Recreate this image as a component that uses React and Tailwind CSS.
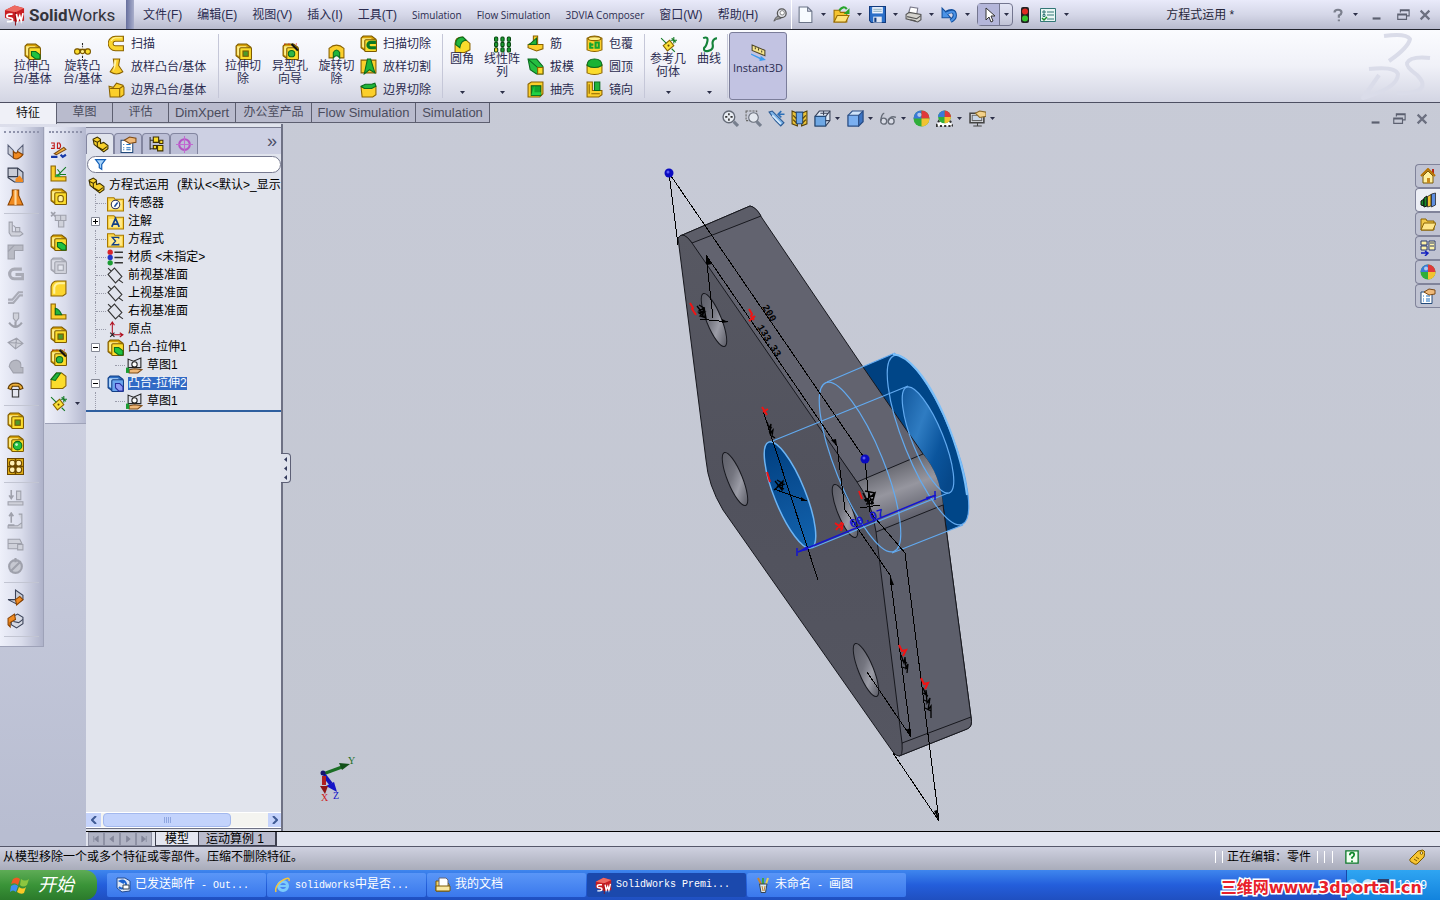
import { useState } from "react";

function Block({ fill = "#fbdc2c", side = "#d7a106", line = "#7d5a00", top = "#fff08a" }) {
  return (
    <>
      <path d="M1 3l2-2h8l4 3v11H5l-4-3z" fill={side} stroke={line} />
      <path d="M2 3h8l3 2H5v8l-3-2z" fill={top} />
      <rect x="4.500" y="4.500" width="11" height="11" rx="1" fill={fill} stroke={line} />
    </>
  );
}

function Folder() {
  return (
    <>
      <path d="M.5 2.500h6l1 1.500h8v11H.5z" fill="#fdd94a" stroke="#a87800" />
      <path d="M2 5.500h12v8H2z" fill="#ffe98c" />
    </>
  );
}

const gray = { fill: "#cfd1da", stroke: "#9fa1ac" };

const icons = {
  extrude: <><Block /><path d="M7 8h4l4 3v4h-4l-4-3z" fill="#1fc240" stroke="#0a6a1e" /></>,
  extrudeBlue: <><Block fill="#6aa5ee" side="#2d6fc4" line="#123f86" top="#b9dcff" /><path d="M8 8h4l3 3v4h-4l-3-3z" fill="#8f9cf5" stroke="#2b2fa0" /></>,
  revolve: <><path d="M8 0v4M8 12v4" stroke="#222" strokeDasharray="2 1" /><path d="M2 6h12v3H2z" fill="#fbdc2c" stroke="#7d5a00" /><circle cx="3" cy="8" r="2.500" fill="#fbdc2c" stroke="#7d5a00" /><circle cx="13" cy="8" r="2.500" fill="#fbdc2c" stroke="#7d5a00" /><circle cx="8" cy="8" r="2" fill="#fff08a" stroke="#7d5a00" /></>,
  sweep: <><path d="M15 3.500H7a4.500 4.500 0 0 0 0 9h8" fill="none" stroke="#8a6200" strokeWidth="5.500" /><path d="M14 3.500H7a4.500 4.500 0 0 0 0 9h7" fill="none" stroke="#fbd52e" strokeWidth="3.800" /><path d="M13 2.500H7a5 5 0 0 0-4 3" fill="none" stroke="#fff3a0" /></>,
  loft: <><path d="M5 1h6l-1 6 4 6q-6 4-12 0l4-6z" fill="#fbcf2b" stroke="#8a6200" /><path d="M6 2h2l-1 6-2 5z" fill="#fff3a0" /></>,
  boundary: <><path d="M1 5l4 1 3-4 6 2 1 2v7l-3 2H2z" fill="#fbcf2b" stroke="#8a6200" /><path d="M2 7h9l3-2M11 7v8" fill="none" stroke="#8a6200" /></>,
  cut: <><Block /><rect x="7.500" y="7.500" width="5" height="5" fill="#4f9a2a" stroke="#7d5a00" /></>,
  hole: <><Block /><circle cx="9" cy="10" r="3" fill="#2fb648" stroke="#0a6a1e" /><path d="M9 1l6 6" stroke="#111" strokeWidth="2" /><path d="M2 1h1M6 1h1M13 1h1" stroke="#e11" /></>,
  revcut: <><path d="M1 5q7-6 14 0v9h-4q-3-9-6 0H1z" fill="#fbcf2b" stroke="#8a6200" /><path d="M5 14V9q3-5 6 0v5q-3-4-6 0z" fill="#1fb53a" stroke="#0a6a1e" /></>,
  sweepcut: <><Block /><path d="M15 7h-5a2.500 2.500 0 0 0 0 5h5" fill="none" stroke="#0a7a24" strokeWidth="3" /></>,
  loftcut: <><path d="M1 2h14v12H1z" fill="#fbcf2b" stroke="#8a6200" /><path d="M7 1h3l4 13-5-3-5 4z" fill="#1fb53a" stroke="#0a6a1e" /></>,
  boundarycut: <><path d="M1 6l4 0 3-2 7 1v8l-3 2H2z" fill="#fbcf2b" stroke="#8a6200" /><path d="M1 5l4-2h6l3-1 1 3-4 2H4z" fill="#1fb53a" stroke="#0a6a1e" /></>,
  fillet: <><path d="M1 7q0-6 7-6l7 6v6l-5 2.500H1z" fill="#fbdc2c" stroke="#8a6200" /><path d="M1.500 8q0-7 7-7l3 3q-5 0-6 7z" fill="#22b53c" stroke="#0a6a1e" /></>,
  chamfer: <><path d="M1 7l5-6h5l4 3v9l-3 2.500H1z" fill="#fbdc2c" stroke="#8a6200" /><path d="M1 7l5-6h4L5 8z" fill="#22b53c" stroke="#0a6a1e" /></>,
  round: <><path d="M1 6q1-5 6-5h8v12l-3 2H1z" fill="#fbd52e" stroke="#8a6200" /><path d="M4 13V7q1-4 5-4h5" fill="none" stroke="#fff3a0" strokeWidth="2" /></>,
  pattern: (
    <g stroke="#0a4a12">
      {[2, 8, 14].map((x) => <rect key={x} x={x - 1.5} y="1" width="3" height="4" rx="1" fill="#1a9c32" />)}
      {[2, 8, 14].map((x) => <rect key={x} x={x - 1.5} y="6" width="3" height="4" rx="1" fill="#1a9c32" />)}
      <rect x=".5" y="11" width="3" height="4" rx="1" fill="#fbcf2b" />
      {[8, 14].map((x) => <rect key={x} x={x - 1.5} y="11" width="3" height="4" rx="1" fill="#1a9c32" />)}
    </g>
  ),
  rib: <><path d="M6 1h4v8h5v4l-6 2-8-3v-3l5-2z" fill="#fbcf2b" stroke="#8a6200" /><path d="M2 9l7-6v6z" fill="#1fb53a" stroke="#0a6a1e" /></>,
  draft: <><path d="M1 1h8l6 7v7H9L3 11z" fill="#25bf40" stroke="#0a6a1e" /><path d="M1 1l9 8h5M10 9v6" stroke="#0a6a1e" fill="none" /><path d="M10 9h5v6h-5z" fill="#fbdc2c" stroke="#8a6200" /></>,
  shell: <><path d="M1 3l3-2h11v11l-3 3H1z" fill="#fbcf2b" stroke="#8a6200" /><path d="M4 4.500h9v9H4z" fill="#11a52e" stroke="#0a5a18" /><path d="M7 4.500v6h6v3H4z" fill="#1fd243" /></>,
  wrap: <><path d="M1 3q7-4 14 0v11q-7 3-14 0z" fill="#fbcf2b" stroke="#8a6200" /><ellipse cx="8" cy="3.500" rx="6" ry="1.800" fill="#fff08a" stroke="#8a6200" /><path d="M4 7v5h3M4 9h3M9 7v5h3V7z" fill="none" stroke="#11a52e" strokeWidth="2" /></>,
  dome: <><path d="M1 6h14v8q-7 3-14 0z" fill="#fbdc2c" stroke="#8a6200" /><path d="M1 7q0-6 7-6t7 6q-7 4-14 0z" fill="#19b334" stroke="#0a6a1e" /></>,
  mirror: <><path d="M1 1h5v8h9v4l-3 2H1z" fill="#fbcf2b" stroke="#8a6200" /><path d="M8 1h5v8H8z" fill="#22b53c" stroke="#0a6a1e" /><path d="M3 3v9M5 12h8" stroke="#8a6200" /></>,
  refgeo: <><path d="M3 9l6-5 4 5-6 5z" fill="#fbe03a" stroke="#8a6200" /><path d="M1 2l5 5M11 12l3 3M13 1v6M10 4h6M11 2l4 4" stroke="#137a24" /><circle cx="8" cy="9" r="1" fill="#6a4b00" /></>,
  curve: <path d="M2 2q5-2 4 3T3 11q-1 4 4 3t4-6 4-6" fill="none" stroke="#14823a" strokeWidth="2" />,
  instant: <><path d="M2 1l12 5v5L2 6z" fill="#f5e48c" stroke="#4d4526" /><path d="M5 3v2M8 4v2M11 6v2" stroke="#4d4526" /><path d="M1 9l9 4v-2l5 4-6 1v-2L1 10z" fill="#3a9bf0" /></>,
  part: <><path d="M1 3l4-2 3 2v4l3-1 4 3v3l-4 3-9-7z" fill="#f7d02b" stroke="#3d3000" /><path d="M1 4l4 2v4l5 3 4-3M5 6l3-2" fill="none" stroke="#3d3000" /></>,
  props: <><path d="M1 4h11v11.500H1z" fill="#fff" stroke="#234a7a" /><path d="M3 8h1M6 8h4M3 11h1M6 11h4M3 13h1M6 13h4" stroke="#1c6fc0" /><path d="M4 4l5-3 6 1v4l-6 1z" fill="#efb978" stroke="#7c4a16" /></>,
  config: <><path d="M2 1v12M2 4h5M2 12h6" stroke="#333" fill="none" /><path d="M5 1h5v5H5zM9 9h5v5H9z" fill="#fbdc2c" stroke="#3d3000" /><path d="M11 4h3v3h-3zM5 9h3v3H5z" fill="#fbdc2c" stroke="#3d3000" /></>,
  target: <><circle cx="8" cy="8" r="5" fill="none" stroke="#b455c4" strokeWidth="2" /><path d="M8 0v16M0 8h16" stroke="#c36ad2" /></>,
  funnel: <path d="M2 2h12L9.500 8v6l-3-2V8z" fill="#a9d4fa" stroke="#1460b8" strokeWidth="1.500" />,
  sensor: <><Folder /><circle cx="8" cy="9" r="4" fill="#fff" stroke="#335" /><path d="M7 11l3-4" stroke="#1b4c9c" strokeWidth="1.500" /></>,
  note: <><Folder /><path d="M4.500 13L8 5l3.500 8M6 10.500h4" fill="none" stroke="#123f86" strokeWidth="1.600" /></>,
  equation: <><Folder /><path d="M11 7V6H5l3 3.500L5 13h6v-1" fill="none" stroke="#123f86" strokeWidth="1.300" /></>,
  material: <><circle cx="3" cy="3" r="2.500" fill="#d9242b" /><circle cx="3" cy="8" r="2.500" fill="#2337c8" /><circle cx="3" cy="13" r="2.500" fill="#1a9c32" /><path d="M7 3h8M7 8h8M7 13h8" stroke="#333" strokeWidth="1.500" /></>,
  plane: <path d="M1 7l6-6 7 8-6 6zM1 1l3 3M11 12l4 3" fill="none" stroke="#333" />,
  origin: <><path d="M5 13V1M3 4l2-3 2 3M5 13h10M12 11l3 2-3 2" fill="none" stroke="#b01020" /><path d="M3 11l4 4M7 11l-4 4" stroke="#222" /></>,
  sketch: <><path d="M2 2l5 2 7-3v9H2z" fill="none" stroke="#222" /><circle cx="8" cy="7" r="2.500" fill="#fff" stroke="#222" /><path d="M3 12l5-1 7 1-4 3H3z" fill="#f0b878" stroke="#7c4a16" /><path d="M0 10h3v5H0z" fill="#1a9c32" /></>,
  sketch3d: <><path d="M1 1h3v5H1M2 3.500h2M7 1h2q2 2.500 0 5H7z" fill="none" stroke="#c01818" /><path d="M4 11l9-6 2 2-9 5z" fill="#f4b53a" stroke="#7c4a16" /><path d="M1 14h6M10 12l2 2 3-2" stroke="#1638a8" strokeWidth="2" fill="none" /></>,
  ribStar: <><path d="M1 1h4v10h10v4H1z" fill="#fbcf2b" stroke="#8a6200" /><path d="M5 11q0-5 6 0z" fill="#22b53c" /><path d="M7 10l8-8M7 4l3 4M9 9h6" stroke="#137a24" /></>,
  ribPlain: <><path d="M1 1h4v10h10v4H1z" fill="#fbcf2b" stroke="#8a6200" /><path d="M5 5q4 1 6 6H5z" fill="#22b53c" stroke="#0a6a1e" /></>,
  boxHole: <><Block /><rect x="7.500" y="7" width="5" height="6" rx="2" fill="#fff2a0" stroke="#7d5a00" /></>,
  ball: <><Block /><circle cx="10" cy="10" r="4" fill="#23c03f" stroke="#0a6a1e" /><circle cx="9" cy="9" r="1.300" fill="#c8f7cf" /></>,
  vent: (
    <>
      <rect x=".5" y=".5" width="15" height="15" fill="#e8b516" stroke="#6b4700" />
      <g fill="#fff0b8" stroke="#6b4700">
        <circle cx="5" cy="5" r="2.800" /><circle cx="11" cy="5" r="2.800" /><circle cx="5" cy="11" r="2.800" /><circle cx="11" cy="11" r="2.800" />
      </g>
      <path d="M8 1v14M1 8h14" stroke="#6b4700" strokeWidth="1.500" />
    </>
  ),
  bend: <><path d="M1 2l5 5v7L1 10zM15 2l-5 5v7l5-4z" fill="#c9ccd6" stroke="#596078" /><path d="M6 8q3 3 4 0l5 3q-5 6-9 3z" fill="#f08a20" stroke="#8a4300" /></>,
  cubeOr: <><path d="M1 2h9l5 4v9H7l-6-4z" fill="#c9ccd6" stroke="#333a4c" /><path d="M10 2v8H1M10 10l5 5" stroke="#333a4c" fill="none" /><path d="M8 12l4-3 3 4v2H8z" fill="#f08a20" /></>,
  loftOr: <><path d="M5 1h6v5l4 9H1l4-9z" fill="#f08a20" stroke="#8a4300" /><path d="M8 1v14" stroke="#ffd9a0" strokeWidth="2" /></>,
  g1: <g {...gray}><path d="M2 2h3v9h8l2 2-3 2H4l-2-3zM6 5l5 5" /><path d="M8 7h4v4H8z" /></g>,
  g2: <g {...gray}><path d="M1 2h14v5H7v8H1z" fill="#b9bbc5" /><path d="M1 8l6-6" fill="none" /></g>,
  g3: <path d="M14 3H7a4 4 0 0 0 0 9h8V8H8" fill="none" stroke="#a9abb6" strokeWidth="3" />,
  g4: <path d="M1 13h5l6-7h3M1 10h4l6-7h4" fill="none" stroke="#a9abb6" strokeWidth="2" />,
  g5: <g {...gray}><path d="M6 1h5v5l-2.500 3L6 6z" /><path d="M2 10q6 8 12 0M8 9v5" fill="none" strokeWidth="2" /></g>,
  g6: <g {...gray}><path d="M1 7l8-4 6 5-7 5zM1 7l14 1M9 3l-1 10" /></g>,
  g7: <g {...gray}><path d="M2 8q1-6 7-6 5 1 4 7h2v5H6z" fill="#b5b7c1" /></g>,
  gCross: <g {...gray}><path d="M1 1l4 4M5 1L1 5" strokeWidth="1.500" /><path d="M5 4h5v5H5zM10 4h5v5h-5zM8 9h5v6H8z" /></g>,
  gBox: <><Block fill="#cfd1da" side="#b5b7c1" line="#9fa1ac" top="#dddfe8" /><rect x="7.500" y="7.500" width="5" height="5" fill="#e4e6ee" stroke="#9fa1ac" /></>,
  phone: <><path d="M1 7q1-5 7-5t7 5l-3 1-1-3H5L4 8z" fill="#eeb038" stroke="#5f3a00" /><path d="M5 8h6v7H5z" fill="#e4e6ee" stroke="#333" /></>,
  down: <g {...gray}><path d="M4 1v7M2 6l2 3 2-3" fill="none" strokeWidth="1.500" /><path d="M9 2h4v8H9zM1 12h14v3H1z" /></g>,
  up: <g {...gray}><path d="M4 10V2M2 4l2-3 2 3" fill="none" strokeWidth="1.500" /><path d="M11 2h3v8l-4 3H1v2h13V9M1 12h6" /></g>,
  g8: <g {...gray}><path d="M1 4h11l2 4v5H1zM1 8h13" /><path d="M10 9h5v5h-5z" /></g>,
  g9: <><circle cx="8" cy="8" r="6" fill="#c6c8d1" stroke="#9fa1ac" strokeWidth="2" /><path d="M3 13L13 3M8 0v4" stroke="#9fa1ac" strokeWidth="2" /></>,
  angle: <><path d="M8 1v9H1l8 4 6-4V6z" fill="#c9ccd6" stroke="#3a4258" /><path d="M8 10l4-3 3 3-6 5z" fill="#f08a20" stroke="#8a4300" /></>,
  wrapOr: <><path d="M4 5l6-3 5 3v6l-6 4-5-3z" fill="#d5d8e2" stroke="#3a4258" /><path d="M1 6l6-4 1 5-5 3v4L1 12z" fill="#f08a20" stroke="#8a4300" /><path d="M6 9l5 1 4-3" stroke="#3a4258" fill="none" /></>,
  page: <path d="M2 1h8l4 4v10.500H2zM10 1v4h4" fill="#f7fbff" stroke="#6b7488" />,
  open: <><path d="M1 4h5l1 2h6v9H1z" fill="#f5c430" stroke="#9a6d00" /><path d="M4 9h11l-3 6H1z" fill="#ffe37a" stroke="#9a6d00" /><path d="M6 4q4-5 7-1" fill="none" stroke="#28a52c" strokeWidth="2" /><path d="M15.500 2v5.500H10z" fill="#28a52c" /></>,
  save: <><path d="M.5.500h15v15H2l-1.500-2z" fill="#2b6fc8" stroke="#123b7e" /><path d="M3 1h10v6H3z" fill="#eef4ff" /><path d="M4 3h8M4 5h8" stroke="#8ab" /><path d="M4 10h8v5.500H4z" fill="#dfe6f2" /><path d="M6 11v4" stroke="#123b7e" strokeWidth="2" /></>,
  print: <><path d="M5 1l7 1-1 6H3z" fill="#fff" stroke="#778" /><path d="M1 8l3-2 11 2v5l-3 2-11-3z" fill="#d4d3ce" stroke="#555" /><path d="M2 10l9 2 4-3M5 13l5 1" fill="none" stroke="#555" /></>,
  undo: <><path d="M4 7q9-5 9 2 0 3-4 5" fill="none" stroke="#14509e" strokeWidth="4" /><path d="M1 2v9h8L6.500 8 4 5z" fill="#4b93e6" stroke="#14509e" /><path d="M5 7q8-4 8 2 0 3-4 5" fill="none" stroke="#4b93e6" strokeWidth="2" /></>,
  cursor: <path d="M5 1v12l3-3 2 5 2-1-2-5h4z" fill="#fff" stroke="#333" />,
  light: <><rect x="4" y="0" width="8" height="16" rx="2" fill="#222" /><circle cx="8" cy="4.500" r="3" fill="#e02b22" /><circle cx="8" cy="11.500" r="3" fill="#35c42c" /></>,
  options: <><path d="M.5 1.500h15v13H.5z" fill="#eaf7f4" stroke="#377" /><path d="M7 5h7M7 8h7M7 12h7" stroke="#377" /><path d="M3 4h2v2H3zM3 7.500h2v2H3z" fill="none" stroke="#377" /><path d="M2 11l2 2 3-3" stroke="#1a8c2c" strokeWidth="1.500" fill="none" /></>,
  pin: <><circle cx="10" cy="6" r="5" fill="#e3e4ea" stroke="#555" strokeWidth="1.500" /><circle cx="10.500" cy="5.500" r="2.500" fill="#fff" stroke="#777" /><path d="M6 9l3 3-5 1-3 2 2-4z" fill="#999" stroke="#555" /></>,
  zoomFit: <><circle cx="6.500" cy="6.500" r="5.500" fill="#e9edf3" stroke="#666c78" strokeWidth="1.300" /><path d="M6.500 3v2M6.500 8v2M3 6.500h2M8 6.500h2" stroke="#333" strokeWidth="1.500" /><path d="M11 11l4 4" stroke="#777f8e" strokeWidth="3" /></>,
  zoomArea: <><path d="M1 1h10v9H1z" fill="none" stroke="#666" strokeDasharray="2 1" /><circle cx="8" cy="7" r="4.500" fill="#e4e8ef" stroke="#666c78" /><path d="M11 11l4 4" stroke="#777f8e" strokeWidth="3" /></>,
  prev: <><path d="M1 2l3-1 6 6 5 5-3 3-5-5z" fill="#7fb6ea" stroke="#2c5c96" /><path d="M4 5l8 8" stroke="#d6eafc" strokeWidth="1.500" /><path d="M15.500 4H10m2.500-3l-3 3 3 3" stroke="#2c6fb8" strokeWidth="1.500" fill="none" /></>,
  section: <><path d="M1 1l5 2v12l-5-2zM10 3l5-2v12l-5 2z" fill="#ecc335" stroke="#57430a" /><path d="M5 2h6v11H5z" fill="#6aa5e8" stroke="#234a7a" /><path d="M2 5l3 3M2 9l3 3M11 8l3-3M11 12l3-3" stroke="#57430a" /></>,
  orient: <><path d="M1 6l4-5h10v9l-4 5H1z" fill="#dfe9f6" stroke="#3a4258" /><path d="M1 6h10v9H1z" fill="#6fa8e4" stroke="#234a7a" /><path d="M11 6l4-5M6 3h7M9 1v4M11 10h4" stroke="#3a4258" /></>,
  display: <><path d="M1 5l4-4h10v10l-4 4H1z" fill="#cfe3fa" stroke="#2b4f86" /><path d="M1 5h10v10H1z" fill="#7aaff0" stroke="#2b4f86" /><path d="M11 5l4-4v10l-4 4z" fill="#3c74c4" stroke="#2b4f86" /></>,
  glasses: <g fill="#d9dce6" stroke="#666c78" strokeWidth="1.300"><circle cx="3.500" cy="10.500" r="2.800" /><circle cx="10.500" cy="10.500" r="2.800" /><path d="M1 10Q1 4 4 3M8 10q2-5 7-3" fill="none" /></g>,
  sphere: <><circle cx="8" cy="8" r="7.500" fill="#2fae3a" /><path d="M8 8V.500A7.500 7.500 0 0 0 .5 8z" fill="#3a78d8" /><path d="M8 8V.500A7.500 7.500 0 0 1 15.500 8z" fill="#e0393a" /><path d="M8 8h7.500A7.500 7.500 0 0 1 8 15.500z" fill="#f2c230" /><circle cx="6" cy="4.500" r="2" fill="#fff" opacity=".6" /></>,
  scene: <><path d="M0 15l3-5h10l3 5z" fill="#fff" stroke="#333" strokeDasharray="2 2" strokeWidth="2" /><circle cx="8" cy="6.500" r="6" fill="#2fae3a" /><path d="M8 6.500v-6a6 6 0 0 1 6 6z" fill="#e0393a" /><path d="M8 6.500v-6a6 6 0 0 0-6 6z" fill="#3a78d8" /><path d="M8 6.500h6a6 6 0 0 1-6 6z" fill="#f2c230" /></>,
  viewset: <><path d="M1 3h13v9H1z" fill="#e6e8ee" stroke="#444" strokeWidth="1.500" /><path d="M3 5h9v5H3z" fill="#c9d6e8" stroke="#666" /><path d="M6 3l4-2 6 1v4l-6 1z" fill="#f3d18a" stroke="#8a6a2a" /><path d="M4 15h8M8 12v3" stroke="#444" /></>,
  home: <><path d="M3 8v7h10V8L8 3z" fill="#fff0a0" stroke="#7d5a00" /><path d="M12 1h2v5h-2z" fill="#b42a1a" /><path d="M1 8l7-7 7 7" fill="none" stroke="#b87500" strokeWidth="2" /><path d="M7 10h3v5H7z" fill="#c98a1a" /></>,
  books: <><path d="M1 9l3-2v7l-3-1z" fill="#1a8c2c" stroke="#111" /><path d="M4 6l3-2v10l-3 1z" fill="#1a8c2c" stroke="#111" /><path d="M7.500 4.500l3.500-2v11.500l-3.500 1z" fill="#f2c230" stroke="#111" strokeWidth=".7" /><path d="M11.500 2l4-1v12l-4 2z" fill="#5e8ee0" stroke="#111" strokeWidth=".7" /></>,
  folderOpen: <><path d="M1 3h5l1 2h7v9H1z" fill="#f2c94a" stroke="#8a6200" /><path d="M4 7h12l-3 7H1z" fill="#ffe68a" stroke="#8a6200" /></>,
  palette: <><path d="M1 1h6v4H1zM1 6h6v4H1zM9 1h6v9H9z" fill="#fdf2a8" stroke="#2a3a6e" /><path d="M10 3h4M10 6h4" stroke="#2a3a6e" /><path d="M1 13h6M5 11l3 2-3 3" stroke="#1320c0" strokeWidth="1.500" fill="none" /></>,
  mail: <><path d="M2 1h8l5 3v10l-8 1-5-4z" fill="#dfe9f8" stroke="#224a90" /><path d="M4 10a4 4 0 1 0 1-6l4 2" fill="none" stroke="#1a62d0" strokeWidth="2" /><path d="M8 8h6v4H8z" fill="#fff" stroke="#345" /></>,
  ie: <><circle cx="8" cy="9" r="4.500" fill="none" stroke="#7ccbfb" strokeWidth="3" /><path d="M4 9h9" stroke="#7ccbfb" strokeWidth="2" /><path d="M1 15Q-1 9 8 3q7-4 6 1" fill="none" stroke="#f6c53a" strokeWidth="1.500" /></>,
  docs: <><path d="M1 4h10l3 3v7H1z" fill="#f2d36a" stroke="#7d5a00" /><path d="M4 1h7l2 2v7H4z" fill="#fff" stroke="#667" /><path d="M1 9h14v5H1z" fill="#f8e7a2" stroke="#7d5a00" /></>,
  paint: <><path d="M3 1l4 8" stroke="#c9842c" strokeWidth="2" /><path d="M8 1v8" stroke="#3aa54a" strokeWidth="2" /><path d="M13 1l-3 9" stroke="#e6cf5a" strokeWidth="2" /><path d="M4.500 7h7.500l-1.500 8.500H6z" fill="#dce9ee" stroke="#345" /><path d="M7 9l1 5M10 9l-1 5" stroke="#c9842c" /></>,
  help: <><path d="M1 1h14v14H1z" fill="#f2fff2" stroke="#0f7a2c" strokeWidth="1.500" /><path d="M5.500 6q0-3 2.500-3t2.500 2.500Q10.500 7 8 8.500V10M8 12v2" fill="none" stroke="#0f8a2c" strokeWidth="2" /></>,
  tag: <><path d="M1 10l8-8 5-1 2 2-1 5-7 7q-2 1-4-1l-2-1q-2-2-1-3z" fill="#f7c531" stroke="#7d5a00" /><circle cx="12.500" cy="4" r="1.300" fill="#fff" stroke="#7d5a00" /><path d="M5 10l3 2M7 8l3 2" stroke="#7d5a00" /></>,
  question: <path d="M4 5q0-3 4-3t4 3q0 2-3 3.500V11M9 13v2" fill="none" stroke="#7c808e" strokeWidth="2.500" />,
  min: <path d="M3 12h9" stroke="#5c6070" strokeWidth="2.500" />,
  restore: <path d="M5 5V2h10v7h-3M5 3h10M2 7h10v6H2zM2 8h10" fill="none" stroke="#5c6070" strokeWidth="1.300" />,
  close: <path d="M3 3l10 10M13 3L3 13" stroke="#6c7080" strokeWidth="2.500" />,
};

function Icon({ name, className = "h-4 w-4" }) {
  return (
    <svg viewBox="0 0 16 16" className={`shrink-0 ${className}`} aria-hidden="true">
      {icons[name]}
    </svg>
  );
}

function Caret({ className = "" }) {
  return (
    <svg viewBox="0 0 5 3" className={`h-[3px] w-[5px] shrink-0 ${className}`} aria-hidden="true">
      <path d="M0 0h5L2.500 3z" fill="#2c2f48" />
    </svg>
  );
}

function Cube({ className }) {
  return (
    <svg viewBox="0 0 22 22" className={`shrink-0 ${className}`} aria-hidden="true">
      <path d="M1 6l10-5 10 3v13l-9 1-11-4z" fill="#c81e22" />
      <path d="M1 6l10-5 10 3-9 4z" fill="#ee6a62" />
      <path d="M12 8v14" stroke="#8d0f14" />
      <path d="M9 10H6q-3 0-3 2t3 2 3 2-3 2H3" fill="none" stroke="#fff" strokeWidth="1.800" />
      <path d="M13 10l1.500 7 2-5 1.500 5 2-8" fill="none" stroke="#fff" strokeWidth="1.800" />
    </svg>
  );
}

const menus = ["文件(F)", "编辑(E)", "视图(V)", "插入(I)", "工具(T)", "Simulation", "Flow Simulation", "3DVIA Composer", "窗口(W)", "帮助(H)"];

function TitleBar() {
  return (
    <header className="flex h-[30px] shrink-0 items-center border-b border-[#23242e] bg-linear-to-b from-[#e9eafa] via-[#d5d7e8] to-[#b9bbce]">
      <div className="flex w-[126px] shrink-0 items-center gap-1 pl-1">
        <Cube className="h-[22px] w-[21px]" />
        <span className="font-['Roboto',sans-serif] text-[17px] leading-5 text-[#33343c]">
          <b>Solid</b>Works
        </span>
      </div>
      <div className="h-full w-2 shrink-0 bg-linear-to-r from-[#676f9e] to-[#a9aecb]" />
      <nav className="flex h-full shrink-0 items-center gap-[15px] border-r border-white pr-1 pl-[9px]">
        {menus.map((m) => (
          <button
            key={m}
            type="button"
            className={`leading-5 whitespace-nowrap text-[#2b2c50] ${/^[A-Z0-9]/.test(m) ? "font-['Open_Sans',sans-serif] text-[10px]" : "text-xs"}`}
          >
            {m}
          </button>
        ))}
        <button type="button" aria-label="固定菜单"><Icon name="pin" className="h-[14px] w-[14px]" /></button>
      </nav>
      <div className="flex shrink-0 items-center pl-[5px]">
        {["page", "open", "save", "print", "undo"].map((n) => (
          <button key={n} type="button" aria-label={n} className="flex w-9 items-center gap-[7px]">
            <Icon name={n} className="h-[17px] w-[17px]" />
            <Caret />
          </button>
        ))}
        <button type="button" aria-label="选择" className="flex h-[23px] w-9 items-center rounded-sm border border-[#73758f]">
          <span className="flex h-full w-[22px] items-center justify-center border-r border-[#73758f] bg-[#b4b6da]">
            <Icon name="cursor" />
          </span>
          <Caret className="ml-1" />
        </button>
        <button type="button" aria-label="重建模型" className="ml-1"><Icon name="light" /></button>
        <button type="button" aria-label="选项" className="ml-[7px] flex items-center gap-2">
          <Icon name="options" />
          <Caret />
        </button>
      </div>
      <h1 className="min-w-0 flex-1 truncate text-center text-xs text-[#26273a]">方程式运用 *</h1>
      <div className="flex shrink-0 items-center gap-2 pr-2">
        <button type="button" aria-label="帮助" className="mr-1 flex items-center gap-2">
          <Icon name="question" className="h-[14px] w-[14px]" />
          <Caret />
        </button>
        <button type="button" aria-label="最小化"><Icon name="min" className="h-[14px] w-[14px]" /></button>
        <button type="button" aria-label="还原"><Icon name="restore" className="ml-1 h-[14px] w-[14px]" /></button>
        <button type="button" aria-label="关闭"><Icon name="close" className="h-[14px] w-[14px]" /></button>
      </div>
    </header>
  );
}

function BigTool({ icon, lines, width, caret }) {
  return (
    <button type="button" className={`flex h-full shrink-0 flex-col items-center ${width} ${caret ? "pt-[6px]" : "pt-[13px]"}`}>
      <Icon name={icon} className="h-[17px] w-[17px]" />
      <span className="text-xs leading-[13px] whitespace-nowrap">
        {lines.map((l) => <span key={l} className="block">{l}</span>)}
      </span>
      {caret && <Caret className="mt-auto mb-2" />}
    </button>
  );
}

function ToolList({ items, width }) {
  return (
    <div className={`flex h-full shrink-0 flex-col pt-[2px] ${width}`}>
      {items.map(([icon, label]) => (
        <button key={label} type="button" className="flex h-[23px] items-center gap-[6px] text-xs whitespace-nowrap">
          <Icon name={icon} className="h-[17px] w-[17px]" />
          {label}
        </button>
      ))}
    </div>
  );
}

function Rule() {
  return <div className="my-1 w-px shrink-0 self-stretch bg-[#c5c7d8]" />;
}

function Ribbon() {
  return (
    <div className="flex h-[73px] shrink-0 items-stretch border-b border-[#4d4f62] bg-linear-to-b from-[#fbfcff] via-[#f0f1f8] to-[#d3d5e3] pl-[7px] text-[#2b2c50]">
      <BigTool icon="extrude" lines={["拉伸凸", "台/基体"]} width="w-[50px]" />
      <BigTool icon="revolve" lines={["旋转凸", "台/基体"]} width="w-[51px]" />
      <ToolList width="w-[110px]" items={[["sweep", "扫描"], ["loft", "放样凸台/基体"], ["boundary", "边界凸台/基体"]]} />
      <Rule />
      <BigTool icon="cut" lines={["拉伸切", "除"]} width="w-[48px]" />
      <BigTool icon="hole" lines={["异型孔", "向导"]} width="w-[46px]" />
      <BigTool icon="revcut" lines={["旋转切", "除"]} width="w-[47px]" />
      <ToolList width="w-[82px]" items={[["sweepcut", "扫描切除"], ["loftcut", "放样切割"], ["boundarycut", "边界切除"]]} />
      <Rule />
      <BigTool icon="fillet" lines={["圆角"]} width="w-[38px]" caret />
      <BigTool icon="pattern" lines={["线性阵", "列"]} width="w-[42px]" caret />
      <div className="w-1 shrink-0" />
      <ToolList width="w-[59px]" items={[["rib", "筋"], ["draft", "拔模"], ["shell", "抽壳"]]} />
      <ToolList width="w-[58px]" items={[["wrap", "包覆"], ["dome", "圆顶"], ["mirror", "镜向"]]} />
      <Rule />
      <BigTool icon="refgeo" lines={["参考几", "何体"]} width="w-[46px]" caret />
      <BigTool icon="curve" lines={["曲线"]} width="w-[36px]" caret />
      <Rule />
      <button type="button" className="my-[2px] ml-px flex w-[58px] shrink-0 flex-col items-center rounded-[3px] border border-[#7b7d9a] bg-[#c2c3e2] pt-[11px]">
        <Icon name="instant" className="h-[17px] w-[17px]" />
        <span className="font-['Open_Sans',sans-serif] text-[11px] leading-[14px]">Instant3D</span>
      </button>
      <svg viewBox="0 0 80 72" className="ml-auto h-[72px] w-20 shrink-0" aria-hidden="true">
        <g fill="none" stroke="#dadce9" strokeWidth="4" strokeLinejoin="round">
          <path d="M24 6q22-3 26 3-2 9-21 22" />
          <path d="M9 39q26-3 29 5 0 14-35 24l16-23" />
          <path d="M70 28q-20-2-23 5-1 4 10 12 10 10 2 15-8 4-22 3" />
        </g>
      </svg>
    </div>
  );
}

const tabs = [
  ["特征", "w-[57px]"],
  ["草图", "w-[56px]"],
  ["评估", "w-[56px]"],
  ["DimXpert", "w-[67px]"],
  ["办公室产品", "w-[76px]"],
  ["Flow Simulation", "w-[104px]"],
  ["Simulation", "w-[74px]"],
];

function TabRow() {
  const [active, setActive] = useState("特征");
  return (
    <div className="flex h-[21px] shrink-0 items-start">
      <div role="tablist" className="flex w-[722px] shrink-0">
        {tabs.map(([label, w]) => (
          <button
            key={label}
            type="button"
            role="tab"
            aria-selected={active === label}
            onClick={() => setActive(label)}
            className={`${w} ${
              active === label ? "h-[21px] bg-[#eff0f7] text-[#111] text-xs" : "h-5 border-b bg-[#b9bbcd] text-[#4a4b5c] text-[13px]"
            } border-r border-[#5d5f70] leading-[19px] whitespace-nowrap`}
          >
            {/[A-Z]/.test(label) ? label : <span className="block text-xs leading-[19px]">{label}</span>}
          </button>
        ))}
      </div>
      <div className="flex h-[30px] shrink-0 items-center">
        {[["zoomFit"], ["zoomArea"], ["prev"], ["section"], ["orient", 1], ["display", 1], ["glasses", 1], ["sphere"], ["scene", 1], ["viewset", 1]].map(([n, caret]) => (
          <button key={n} type="button" aria-label={n} className={`flex items-center gap-1 ${caret ? "w-[33px]" : "w-[23px]"}`}>
            <Icon name={n} className="h-[17px] w-[17px]" />
            {caret && <Caret />}
          </button>
        ))}
      </div>
      <div className="ml-auto flex h-8 shrink-0 items-center gap-[9px] pr-[11px]">
        {["min", "restore", "close"].map((n) => (
          <button key={n} type="button" aria-label={`文档 ${n}`}><Icon name={n} className="h-[14px] w-[14px]" /></button>
        ))}
      </div>
    </div>
  );
}

const barOne = [
  ["bend", "cubeOr", "loftOr"],
  ["g1", "g2", "g3", "g4", "g5", "g6", "g7", "phone"],
  ["cut", "ball", "vent"],
  ["down", "up", "g8", "g9"],
  ["angle", "wrapOr"],
];
const barTwo = ["sketch3d", "ribStar", "boxHole", "gCross", "extrude", "gBox", "round", "ribPlain", "cut", "hole", "chamfer", "refgeo"];

function SideBars() {
  return (
    <div className="flex w-[86px] shrink-0 items-start gap-px bg-linear-to-b from-[#dcdeeb] to-[#b8bdd1]">
      <div className="mt-[3px] w-11 border-r border-b border-[#9ea2b8] bg-linear-to-r from-[#eef0fa] via-[#d9dceb] to-[#aeb2c9] pb-[9px]">
        <div className="mx-1 mt-1 border-t-2 border-dotted border-[#8f93ab]" />
        <div className="mt-[7px] pl-1">
          {barOne.map((group, i) => (
            <div key={i} className={i ? "mr-1 mt-1 border-t border-[#c2c5d2] pt-[3px]" : ""}>
              {group.map((n) => (
                <button key={n} type="button" aria-label={n} className="flex h-[23px] w-[23px] items-center justify-center">
                  <Icon name={n} className="h-[17px] w-[17px]" />
                </button>
              ))}
            </div>
          ))}
          <div className="mt-1 mr-1 border-t border-[#c2c5d2]" />
        </div>
      </div>
      <div className="mt-[3px] w-[41px] border-b border-[#9ea2b8] bg-linear-to-r from-[#eef0fa] via-[#d9dceb] to-[#b4b8cf] pb-2">
        <div className="mx-1 mt-1 border-t-2 border-dotted border-[#8f93ab]" />
        <div className="mt-[6px] pl-[3px]">
          {barTwo.map((n) => (
            <button key={n} type="button" aria-label={n} className="flex h-[23px] w-full items-center gap-2 pl-[2px]">
              <Icon name={n} className="h-[17px] w-[17px]" />
              {n === "refgeo" && <Caret />}
            </button>
          ))}
        </div>
      </div>
    </div>
  );
}

const nodes = [
  { icon: "sensor", label: "传感器" },
  { icon: "note", label: "注解", mark: "+" },
  { icon: "equation", label: "方程式" },
  { icon: "material", label: "材质 <未指定>" },
  { icon: "plane", label: "前视基准面" },
  { icon: "plane", label: "上视基准面" },
  { icon: "plane", label: "右视基准面" },
  { icon: "origin", label: "原点" },
  { icon: "extrude", label: "凸台-拉伸1", mark: "-" },
  { icon: "sketch", label: "草图1", deep: true },
  { icon: "extrudeBlue", label: "凸台-拉伸2", mark: "-", selected: true },
  { icon: "sketch", label: "草图1", deep: true },
];

function TreeRow({ node }) {
  return (
    <li className="flex h-[18px] items-center">
      <span className="flex h-full w-[21px] shrink-0 items-center pl-[5px]">
        {node.mark ? (
          <svg viewBox="0 0 9 9" className="h-[9px] w-[9px]" aria-hidden="true">
            <path d="M.5.500h8v8h-8z" fill="#fff" stroke="#848894" />
            <path d={node.mark === "+" ? "M2 4.500h5M4.500 2v5" : "M2 4.500h5"} stroke="#000" />
          </svg>
        ) : (
          <span className="ml-1 flex h-full w-3 items-center border-l border-dotted border-[#9a9cab]">
            {!node.deep && <span className="w-[10px] border-t border-dotted border-[#9a9cab]" />}
          </span>
        )}
      </span>
      {node.deep && <span className="mr-px ml-2 w-[10px] shrink-0 border-t border-dotted border-[#9a9cab]" />}
      <button type="button" className="flex items-center gap-1 whitespace-nowrap">
        <Icon name={node.icon} className="h-[17px] w-[17px]" />
        <span className={node.selected ? "bg-[#316ac5] text-xs leading-[13px] text-white" : "text-xs leading-[18px]"}>{node.label}</span>
      </button>
    </li>
  );
}

function TreePanel() {
  return (
    <aside className="relative flex w-[197px] shrink-0 flex-col border-r-2 border-[#6e7184] bg-[#e1e4ed]">
      <div className="mt-[3px] flex h-[27px] shrink-0 items-end border-t border-[#7a7d92] bg-[#cdd0e3]">
        {["part", "props", "config", "target"].map((n, i) => (
          <button
            key={n}
            type="button"
            aria-label={n}
            className={`flex h-[21px] w-7 items-center justify-center rounded-t-sm border border-b-0 border-[#8386a0] ${i ? "bg-[#bcbfd6]" : "bg-[#e1e4ed]"}`}
          >
            <Icon name={n} className="h-[17px] w-[17px]" />
          </button>
        ))}
        <button type="button" aria-label="展开" className="mr-1 ml-auto text-lg leading-[26px] text-[#4d5068]">»</button>
      </div>
      <label className="mt-[2px] ml-[1px] flex h-[17px] shrink-0 items-center gap-1 rounded-full border border-[#777a90] bg-white px-[6px]">
        <Icon name="funnel" className="h-[13px] w-[13px]" />
        <input type="text" aria-label="过滤" className="w-full min-w-0 bg-transparent text-xs outline-none" />
      </label>
      <div className="min-h-0 flex-1 overflow-hidden pt-[3px] text-black">
        <div className="flex h-[18px] items-center gap-1 pl-[2px] text-xs whitespace-nowrap">
          <Icon name="part" className="h-[17px] w-[17px]" />
          <span>方程式运用</span>
          <span className="ml-1">(默认&lt;&lt;默认&gt;_显示</span>
        </div>
        <ul>
          {nodes.map((n, i) => <TreeRow key={i} node={n} />)}
        </ul>
        <div className="h-[3px] border-t-2 border-[#2f5f9f]" />
      </div>
      <div className="flex h-4 shrink-0 items-center border-y border-white bg-[#f4f4f0]">
        <button type="button" aria-label="向左滚动" className="flex h-full w-[15px] items-center justify-center bg-[#c5d3fb]">
          <svg viewBox="0 0 6 8" className="h-2 w-[6px]"><path d="M5 0L1 4l4 4" fill="none" stroke="#3f5a94" strokeWidth="2" /></svg>
        </button>
        <div className="mx-[2px] flex h-full w-32 items-center justify-center gap-px rounded-sm border border-[#a3b8ee] bg-[#c3d3fc]">
          {[0, 1, 2, 3].map((i) => <span key={i} className="h-[6px] w-px bg-[#8fa6e0]" />)}
        </div>
        <button type="button" aria-label="向右滚动" className="ml-auto flex h-full w-[13px] items-center justify-center bg-[#c5d3fb]">
          <svg viewBox="0 0 6 8" className="h-2 w-[6px]"><path d="M1 0l4 4-4 4" fill="none" stroke="#3f5a94" strokeWidth="2" /></svg>
        </button>
      </div>
      <div className="h-[3px] shrink-0 border-t border-[#6e7184]" />
      <button type="button" aria-label="折叠面板" className="absolute top-[329px] -right-[10px] z-10 flex h-[30px] w-[10px] flex-col items-center justify-center gap-1 rounded-r-sm border border-l-0 border-[#5d6076] bg-[#dfe2ec]">
        {[0, 1, 2].map((i) => (
          <svg key={i} viewBox="0 0 3 5" className="h-[5px] w-[3px]"><path d="M3 0v5L0 2.500z" fill="#333a5c" /></svg>
        ))}
      </button>
    </aside>
  );
}

const holes = [[714, 320], [735, 479], [845, 511], [866, 670]];

function Model() {
  return (
    <svg viewBox="283 124 1157 707" preserveAspectRatio="xMinYMin meet" className="absolute inset-0 h-full w-full" role="img" aria-label="模型">
      <defs>
        <linearGradient id="front" x1="0" y1="0" x2="0" y2="1">
          <stop offset="0" stopColor="#575862" />
          <stop offset="0.500" stopColor="#51525d" />
          <stop offset="1" stopColor="#555661" />
        </linearGradient>
        <linearGradient id="bore" x1="0.200" y1="0" x2="0.500" y2="1">
          <stop offset="0" stopColor="#5b5c66" />
          <stop offset="0.450" stopColor="#74757f" />
          <stop offset="0.700" stopColor="#9b9ca6" />
          <stop offset="1" stopColor="#62636d" />
        </linearGradient>
        <linearGradient id="round" gradientUnits="userSpaceOnUse" x1="888" y1="466" x2="908" y2="520">
          <stop offset="0" stopColor="#66676f" />
          <stop offset="0.450" stopColor="#96969f" />
          <stop offset="1" stopColor="#5e5f6b" />
        </linearGradient>
        <linearGradient id="blue" x1="0" y1="0" x2="0.300" y2="1">
          <stop offset="0" stopColor="#0b4f94" />
          <stop offset="0.450" stopColor="#2f7cc2" />
          <stop offset="0.750" stopColor="#0b559d" />
          <stop offset="1" stopColor="#06488a" />
        </linearGradient>
        <linearGradient id="disc" x1="0" y1="0" x2="0" y2="1">
          <stop offset="0" stopColor="#003f80" />
          <stop offset="0.600" stopColor="#0d559c" />
          <stop offset="1" stopColor="#1163ae" />
        </linearGradient>
      </defs>

      {/* boss behind the plate */}
      <path d="M827 382L895 353L960 526L892 553z" fill="#00407f" />
      <ellipse rx="24" ry="91" transform="translate(928 440) rotate(-22)" fill="#004688" />
      <ellipse rx="15.500" ry="57" transform="translate(928 440) rotate(-22)" fill="url(#blue)" />

      {/* plate */}
      <path d="M680 236L750 206Q756 207 762 218L863 367L923 454Q939 474 943 505L971 717Q973 727 967 729L899 756L870 500z" fill="#62636f" stroke="#17181e" />
      <path d="M876 532L943 505L971 717Q973 727 967 729L899 756z" fill="#5d5f6b" />
      <path d="M857 482L923 454Q940 474 943 505L876 532Q872 502 857 482z" fill="url(#round)" />
      <path d="M680 236L750 206Q756 207 761 216L692 243Q686 234 680 236z" fill="#5c5d68" stroke="#17181e" />
      <path d="M902 743L971 717Q973 727 967 729L899 756z" fill="#5d5e69" stroke="#17181e" />
      <path d="M678 238Q683 230 692 243L857 482Q872 502 876 532L902 743Q903 757 899 756Q896 756 893 752L723 510Q708 485 706 460z" fill="url(#front)" stroke="#17181e" />
      <path d="M857 482L923 454M876 532L943 505" stroke="#17181e" />
      <path d="M943 505L971 717" stroke="#17181e" />
      {holes.map(([x, y]) => (
        <ellipse key={x} rx="7.500" ry="28.500" transform={`translate(${x} ${y}) rotate(-22)`} fill="url(#bore)" stroke="#17181e" />
      ))}

      {/* selected faces and preview edges */}
      <ellipse rx="15.500" ry="57" transform="translate(790 495) rotate(-22)" fill="url(#disc)" stroke="#6cb4f4" strokeWidth="1.500" />
      <g fill="none" stroke="#62aaf0" strokeWidth="1.200">
        <ellipse rx="24" ry="91" transform="translate(860 467) rotate(-22)" />
        <ellipse rx="24" ry="91" transform="translate(928 440) rotate(-22)" />
        <ellipse rx="15.500" ry="57" transform="translate(928 440) rotate(-22)" />
        <path d="M827 382L895 353M892 553L963 525M770 442L908 386M812 548L948 493" />
      </g>
      <path d="M893 354C925 358 960 440 967 495" fill="none" stroke="#7cc0fa" strokeWidth="2" />

      {/* sketch lines */}
      <g fill="none" stroke="#000" shapeRendering="crispEdges">
        <path d="M678 245L669 173L865 459L870 512L905 553L939 821L893 753" />
        <path d="M713 318L706 255L837 446L845 510L890 575L911 737L867 672" />
        <path d="M763 411L818 580M774 489L807 501M700 319L728 322M860 508L880 505" />
      </g>
      <path d="M706 255l6 9-5 1zM837 446l-6-6 5-1zM890 575l4 10-4 0zM911 737l-5-7 4-2zM939 821l-5-10 3-1zM807 501l-6-4v4zM728 322l-6-3v4z" />

      {/* dimension */}
      <path d="M798 552L936 495M797 548v8M935 491v9" stroke="#1414d0" strokeWidth="1.500" />
      <path d="M798 552l9-6 1 4zM936 495l-10 2 1 3z" fill="#1414d0" />
      <text x="851" y="528" transform="rotate(-20 851 528)" fill="#1414d0" fontSize="12" fontFamily="Liberation Mono, monospace" fontWeight="bold">60.07</text>
      <text x="762" y="307" transform="rotate(58 762 307)" fontSize="10" fontFamily="Liberation Mono, monospace" fontWeight="bold">200</text>
      <text x="757" y="327" transform="rotate(58 757 327)" fontSize="10" fontFamily="Liberation Mono, monospace" fontWeight="bold">133.33</text>
      <g fill="none" stroke="#000" strokeWidth="1.300">
        <path d="M697 306l6 8 1-7 2 11-7-5 6-1M699 305l5 3-5 3 6 1-5 4 6 2" />
        <path d="M775 481l7 9 1-9-6 6 8-3M777 480l5 3-4 3 6 3M774 490l5-4" />
        <path d="M863 493l5 10 1-10 3 11 3-11-10 8 9-2M864 500l11-5M866 504l8-1M865 491l10 2" />
        <path d="M767 422l2 6 2-4-1 9 3-3-1 6 3 2M768 426l4 2M769 431l4 3" />
        <path d="M901 655l3 8 1-6 1 11 2-4-1 9M901 660l6 3M902 667l6 2M923 688l4 9-1-7 1 13 3-5-2 12 3-4 0 12M923 693l5 3M924 700l6 3M925 708l6 3" />
      </g>
      <g fill="none" stroke="#f01414" strokeWidth="2">
        <path d="M690 303l3 5-1 1 4 6M749 309l3 5-1 2 3 4M749 321l6-5M762 407l5 8M763 412l5-3M767 472l3 10M859 491l3 8M835 523l8 6M836 530l6-8M841 531l2-8" />
        <path d="M899 645l3 6 4-1-3 6M921 678l3 6 4-1-3 6" />
      </g>
      {[[669, 173], [865, 459]].map(([x, y]) => (
        <g key={x}>
          <circle cx={x} cy={y} r="4.500" fill="#0a0ac0" />
          <circle cx={x - 1} cy={y - 1} r="1.500" fill="#5a5af5" />
        </g>
      ))}

      {/* axis triad */}
      <path d="M323 774L342 767" stroke="#1b6e24" strokeWidth="3" />
      <path d="M339 763l11 1-8 6z" fill="#12501a" />
      <path d="M324 775L331 784" stroke="#1414b8" strokeWidth="4" />
      <path d="M326 786l8-4 3 10z" fill="#1414c8" />
      <path d="M324 776v9" stroke="#b02020" strokeWidth="4" />
      <path d="M320 786h8l-3 8z" fill="#8e1616" />
      <circle cx="323" cy="773" r="2.500" fill="#151570" />
      <g fontSize="10" fontFamily="Liberation Serif, serif">
        <text x="348" y="764" fill="#1b6e24">Y</text>
        <text x="321" y="801" fill="#d02020">X</text>
        <text x="333" y="799" fill="#1414c8">Z</text>
      </g>
    </svg>
  );
}

function Viewport() {
  return (
    <main className="relative min-w-0 flex-1">
      <Model />
      <div className="absolute top-10 right-0 flex flex-col">
        {["home", "books", "folderOpen", "palette", "sphere", "props"].map((n) => (
          <button
            key={n}
            type="button"
            aria-label={n}
            className={`flex h-6 w-[25px] items-center justify-center rounded-l-sm border border-r-0 border-[#80839a] ${n === "books" ? "bg-[#eceef5]" : "bg-[#c0c3d2]"}`}
          >
            <Icon name={n} />
          </button>
        ))}
      </div>
    </main>
  );
}

function BottomTabs() {
  return (
    <div className="flex h-[15px] shrink-0 bg-[#e0e3ee]">
      <div className="w-[86px] shrink-0 bg-[#b8bdd1]" />
      <div className="flex min-w-0 flex-1 border-t border-black">
        <div className="mr-[3px] ml-[2px] flex">
          {["M11 4v8L6 8zM5 4v8", "M10 4v8L5 8z", "M6 4v8l5-4z", "M5 4v8l5-4zM11 4v8"].map((d) => (
            <button key={d} type="button" aria-label="切换" className="flex h-full w-4 items-center justify-center border border-[#8e91a4] bg-[#b0b3c4]">
              <svg viewBox="0 0 16 16" className="h-3 w-3"><path d={d} fill="#83869a" stroke="#83869a" /></svg>
            </button>
          ))}
        </div>
        <button type="button" className="w-11 border-r border-b border-l border-[#3d3f4d] bg-[#e4e6f0] text-xs leading-[12px]">模型</button>
        <button type="button" className="w-[78px] border-r-2 border-b border-[#3d3f4d] bg-[#b9bbcd] pr-1 text-xs leading-[12px]">运动算例 1</button>
      </div>
    </div>
  );
}

function StatusBar() {
  return (
    <div className="flex h-6 shrink-0 items-center border-t border-[#55576a] bg-linear-to-b from-[#cfd1e0] to-[#a9acba] pb-1 pl-[3px] text-xs leading-[18px] text-black">
      <span className="truncate">从模型移除一个或多个特征或零部件。压缩不删除特征。</span>
      <div className="ml-auto flex shrink-0 items-center">
        <span className="mr-1 h-3 w-2 border-x border-white" />
        <span>正在编辑：零件</span>
        <span className="ml-[6px] h-3 w-2 border-x border-white" />
        <span className="h-3 w-2 border-r border-white" />
        <button type="button" aria-label="帮助" className="ml-3"><Icon name="help" className="h-[14px] w-[14px]" /></button>
        <button type="button" aria-label="标签" className="mr-[15px] ml-[50px]"><Icon name="tag" /></button>
      </div>
    </div>
  );
}

const tasks = [
  ["mail", "已发送邮件 - Out..."],
  ["ie", "solidworks中是否..."],
  ["docs", "我的文档"],
  ["sw", "SolidWorks Premi..."],
  ["paint", "未命名 - 画图"],
];

function Taskbar() {
  return (
    <footer className="relative flex h-[30px] shrink-0 items-stretch bg-linear-to-b from-[#3f86ee] via-[#245edb] to-[#1f4fc0]">
      <button type="button" className="mr-[10px] flex w-[97px] shrink-0 items-center gap-2 rounded-r-xl bg-linear-to-b from-[#5eac56] via-[#3a9438] to-[#2b7a2b] pl-[10px] text-white">
        <svg viewBox="0 0 20 18" className="h-[18px] w-5" aria-hidden="true">
          <path d="M3 3q4-3 7 0L8 9Q5 6 1 8z" fill="#ee5a24" />
          <path d="M11 3q4 3 8 0l-2 6q-4 3-7 0z" fill="#8cc63f" />
          <path d="M1 10q4-3 7 0l-2 6q-3-3-6 0z" fill="#3f8ff0" />
          <path d="M9 11q4 3 7 0l-2 6q-3 2-7-1z" fill="#fbc927" />
        </svg>
        <span className="text-lg italic leading-5">开始</span>
      </button>
      {tasks.map(([icon, label]) => (
        <button
          key={label}
          type="button"
          className={`mt-[3px] mr-px mb-[3px] flex w-[159px] shrink-0 items-center gap-1 rounded-xs pl-2 whitespace-nowrap text-white ${
            icon === "sw" ? "bg-[#1b49ad]" : "bg-linear-to-b from-[#5a96f7] to-[#3a78ec]"
          }`}
        >
          {icon === "sw" ? <Cube className="h-[17px] w-[17px]" /> : <Icon name={icon} />}
          <span className="font-['Liberation_Mono','Noto_Sans_CJK_SC',monospace] text-[10px] leading-4">
            {label.split(/([\u4e00-\u9fa5]+)/).map((s, i) => (i % 2 ? <span key={i} className="text-xs leading-4">{s}</span> : s))}
          </span>
        </button>
      ))}
      <div className="ml-auto flex w-[94px] shrink-0 items-center justify-end gap-1 border-l border-[#1748a8] bg-linear-to-b from-[#2fa5f2] to-[#1283dd] pr-[13px] text-xs text-white">
        <span className="h-3 w-3 rounded-full bg-[#9fd2f7]" />
        <span className="h-3 w-3 rounded-full bg-[#c4e4fb]" />
        <span className="h-3 w-3 bg-[#2f3f6b]" />
        <span className="pl-1">10:39</span>
      </div>
      <a
        href="#portal"
        className="absolute right-[18px] bottom-[2px] font-['DejaVu_Sans','Noto_Sans_CJK_SC',sans-serif] text-base leading-5 font-bold whitespace-nowrap text-[#e8202a] [-webkit-text-stroke:3px_white] [paint-order:stroke]"
      >
        三维网www.3dportal.cn
      </a>
    </footer>
  );
}

export default function App() {
  return (
    <div className="flex h-screen flex-col overflow-hidden bg-linear-to-b from-[#c8cbd7] to-[#c2c6d1] font-['Liberation_Sans','Noto_Sans_CJK_SC',sans-serif]">
      <TitleBar />
      <Ribbon />
      <TabRow />
      <div className="flex min-h-0 flex-1">
        <SideBars />
        <TreePanel />
        <Viewport />
      </div>
      <BottomTabs />
      <StatusBar />
      <Taskbar />
    </div>
  );
}
